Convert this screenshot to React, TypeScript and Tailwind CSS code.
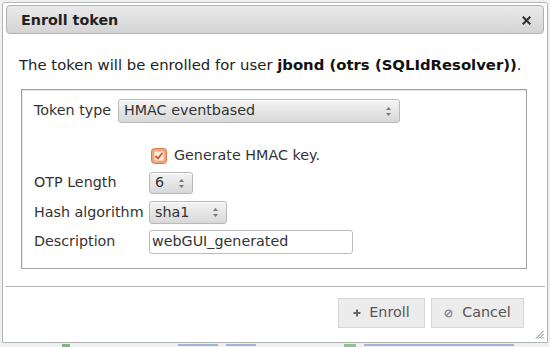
import React from "react";

const font = { fontFamily: '"DejaVu Sans", Verdana, sans-serif' };

function Arrows() {
  return (
    <svg width="7" height="11" viewBox="0 0 7 11" className="shrink-0">
      <path d="M3.5 1 L6 4 L1 4 Z" fill="#777" />
      <path d="M3.5 10 L6 7 L1 7 Z" fill="#777" />
    </svg>
  );
}

function Select({ value, w, h }: { value: string; w: string; h: string }) {
  return (
    <div
      className={`${w} ${h} flex items-center justify-between pl-[5px] pr-[7px] border border-[#b9b9b9] rounded-[3px] bg-linear-to-b from-[#f4f4f4] to-[#d8d8d8] text-[14.3px] text-[#333] shadow-[inset_0_1px_0_#fff]`}
    >
      <span>{value}</span>
      <Arrows />
    </div>
  );
}

export default function App() {
  return (
    <div
      className="w-[550px] h-[347px] overflow-hidden bg-[#eef0f2] flex flex-col"
      style={font}
    >
      <div className="relative mx-[2px] mt-[2px] h-[341px] shrink-0 border border-[#b4b4b4] bg-white rounded-t-[3px] p-[2px] flex flex-col">
        {/* title bar */}
        <div className="h-[29px] shrink-0 mx-[1px] flex items-center justify-between border border-[#b0b0b0] rounded-[4px] bg-linear-to-b from-[#eaeaea] to-[#d4d4d4] pl-[14px] pr-[12px]">
          <span className="text-[14.3px] font-bold text-[#222] mt-[2px]">Enroll token</span>
          <svg width="9" height="9" viewBox="0 0 9 9" className="mt-[2px]">
            <path d="M1.5 1.5 L7.5 7.5 M7.5 1.5 L1.5 7.5" stroke="#333" strokeWidth="2.2" strokeLinecap="square" />
          </svg>
        </div>

        {/* body */}
        <div className="pl-[14px] pr-[17px] flex flex-col">
          <p className="mt-[21px] h-[20px] leading-[20px] text-[14.85px] text-[#222] whitespace-nowrap">
            The token will be enrolled for user <b className="text-[#111]">jbond (otrs (SQLIdResolver))</b>.
          </p>

          <div className="mt-[14px] ml-[2px] w-[506px] h-[180px] border border-[#a3a3a3] shadow-[inset_1px_1px_0_#e6e6e6] pl-[12px] pt-[9px] flex flex-col text-[14.3px] text-[#333]">
            <div className="flex items-center h-[24px] gap-[5px]">
              <span className="w-[79px] whitespace-nowrap">Token type</span>
              <Select value="HMAC eventbased" w="w-[282px]" h="h-[24px]" />
            </div>

            <div className="flex items-center mt-[25px] h-[16px]">
              <div className="w-[117px]" />
              <svg width="16" height="16" viewBox="0 0 16 16" className="shrink-0">
                <rect x="0.5" y="0.5" width="15" height="15" rx="3" fill="#f3a57c" stroke="#dc7a49" />
                <rect x="3" y="3" width="10" height="10" rx="1" fill="#fbe9df" stroke="#e8a583" strokeWidth="0.8" />
                <path d="M4.5 8 L7 10.5 L11.5 4.8" stroke="#c5592a" strokeWidth="1.8" fill="none" />
              </svg>
              <span className="ml-[7px]">Generate HMAC key.</span>
            </div>

            <div className="flex items-center mt-[8px] h-[22px]">
              <span className="w-[115px] whitespace-nowrap">OTP Length</span>
              <Select value="6" w="w-[44px]" h="h-[22px]" />
            </div>

            <div className="flex items-center mt-[7px] h-[23px]">
              <span className="w-[115px] whitespace-nowrap">Hash algorithm</span>
              <Select value="sha1" w="w-[78px]" h="h-[23px]" />
            </div>

            <div className="flex items-center mt-[6px] h-[24px]">
              <span className="w-[115px] whitespace-nowrap">Description</span>
              <div className="w-[204px] h-[24px] border border-[#bcbcbc] rounded-[3px] bg-white flex items-center pl-[2px] text-[14.3px] text-[#333]">
                webGUI_generated
              </div>
            </div>
          </div>
        </div>

        {/* separator + buttons */}
        <div className="mt-[17px] border-t border-[#b9b9b9] flex justify-end gap-[6px] pr-[21px] pt-[11px]">
          <div className="w-[87px] h-[30px] flex items-center justify-center gap-[8px] border border-[#d6d6d6] bg-[#ececec] text-[14.3px] text-[#555]">
            <svg width="8" height="8" viewBox="0 0 8 8">
              <path d="M4 0.5 V7.5 M0.5 4 H7.5" stroke="#666" strokeWidth="2" />
            </svg>
            <span>Enroll</span>
          </div>
          <div className="w-[93px] h-[30px] flex items-center justify-center gap-[9px] border border-[#d6d6d6] bg-[#ececec] text-[14.3px] text-[#555]">
            <svg width="9" height="9" viewBox="0 0 9 9">
              <circle cx="4.5" cy="4.5" r="3.3" stroke="#888" strokeWidth="1.3" fill="none" />
              <path d="M2.2 6.8 L6.8 2.2" stroke="#888" strokeWidth="1.3" />
            </svg>
            <span>Cancel</span>
          </div>
        </div>

        {/* resize handle */}
        <svg width="9" height="9" viewBox="0 0 9 9" className="absolute right-[3px] bottom-[3px]">
          <path d="M8.5 1 L1 8.5 M8.5 4 L4 8.5 M8.5 7 L7 8.5" stroke="#777" strokeWidth="1" />
        </svg>
      </div>

      {/* glimpse of the page beneath the dialog */}
      <div className="flex-1 flex items-start gap-[8px] pl-[62px] pt-[1px]">
        <div className="w-[8px] h-[3px] bg-[#7fb77f]" />
        <div className="w-[40px] h-[2px] bg-[#9fb3d6] ml-[100px]" />
        <div className="w-[30px] h-[2px] bg-[#9fb3d6]" />
        <div className="w-[12px] h-[3px] bg-[#8fc28f] ml-[80px]" />
        <div className="w-[150px] h-[2px] bg-[#9fb3d6]" />
      </div>
    </div>
  );
}
